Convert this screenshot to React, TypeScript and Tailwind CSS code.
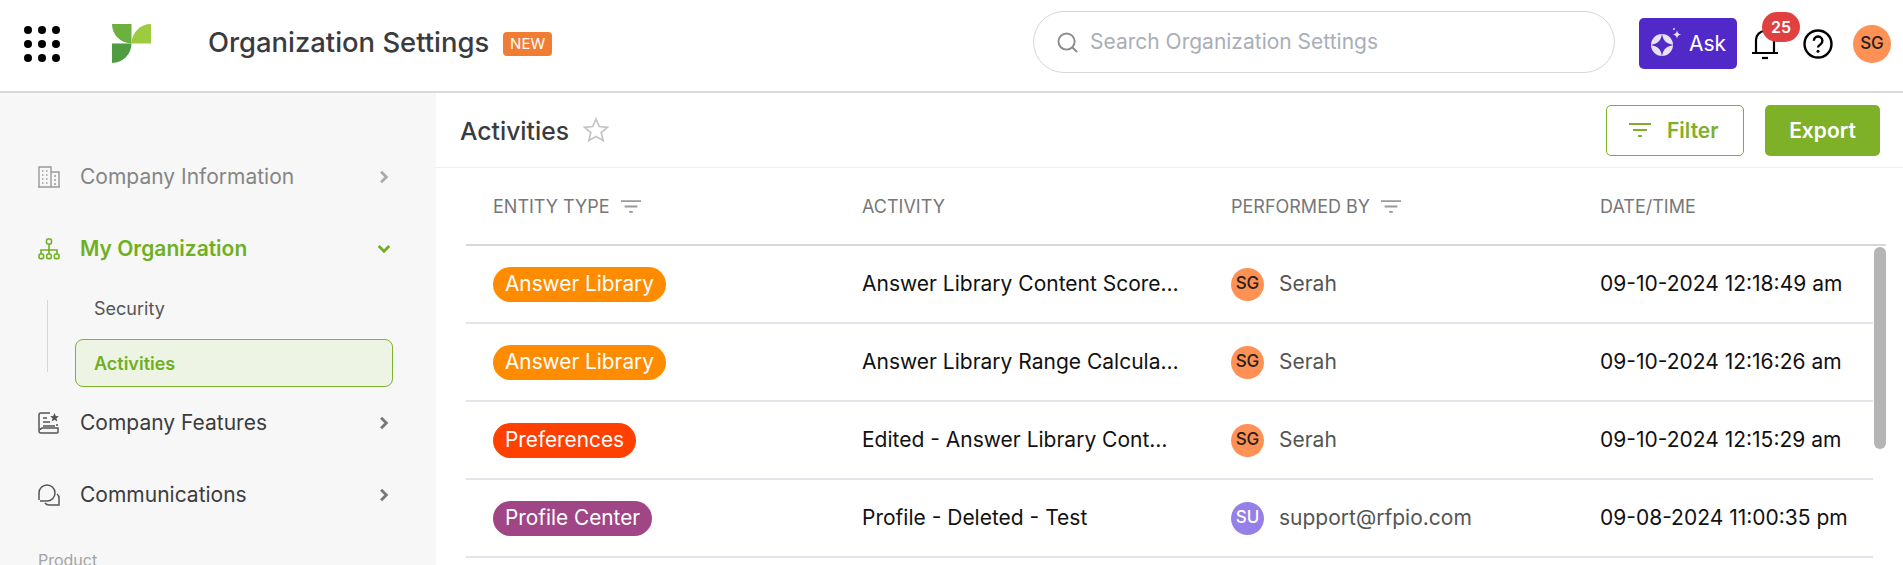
import React, { ReactElement } from "react";

const rows = [
  { type: "Answer Library", color: "bg-[#ff8c00]", activity: "Answer Library Content Score…", by: "Serah", initials: "SG", avatar: "bg-[#ff9155] text-[#222]", date: "09-10-2024 12:18:49 am" },
  { type: "Answer Library", color: "bg-[#ff8c00]", activity: "Answer Library Range Calcula…", by: "Serah", initials: "SG", avatar: "bg-[#ff9155] text-[#222]", date: "09-10-2024 12:16:26 am" },
  { type: "Preferences", color: "bg-[#ff4000]", activity: "Edited - Answer Library Cont…", by: "Serah", initials: "SG", avatar: "bg-[#ff9155] text-[#222]", date: "09-10-2024 12:15:29 am" },
  { type: "Profile Center", color: "bg-[#a04585]", activity: "Profile - Deleted - Test", by: "support@rfpio.com", initials: "SU", avatar: "bg-[#9580ea] text-white", date: "09-08-2024 11:00:35 pm" },
];

function FilterIcon({ className }: { className: string }): ReactElement {
  return (
    <svg viewBox="0 0 22 14" fill="none" stroke="currentColor" strokeWidth="2" className={className}>
      <path d="M0 1h22M4 7h14M9 13h4" />
    </svg>
  );
}

function Chevron({ down, className }: { down?: boolean; className: string }): ReactElement {
  return (
    <svg viewBox="0 0 12 12" fill="none" stroke="currentColor" strokeWidth="2.4" className={className}>
      <path d={down ? "M1.5 3.5 6 8l4.5-4.5" : "M3.5 1.5 8 6l-4.5 4.5"} />
    </svg>
  );
}

function NavItem({ icon, label, labelClass, chevronClass }: { icon: ReactElement; label: string; labelClass: string; chevronClass: string }): ReactElement {
  return (
    <div className="flex items-center h-[24px] pl-[38px] pr-[45px]">
      <div className="w-[42px] shrink-0">{icon}</div>
      <span className={`flex-1 text-[21px] ${labelClass}`}>{label}</span>
      <Chevron className={`w-[14px] h-[14px] ${chevronClass}`} />
    </div>
  );
}

export default function App(): ReactElement {
  return (
    <div className="h-[565px] w-[1903px] overflow-hidden bg-white flex flex-col font-['Inter',sans-serif]">
      {/* top bar */}
      <header className="h-[93px] shrink-0 border-b-2 border-[#d9d9d9] flex items-center">
        <svg viewBox="0 0 36 36" className="ml-[24px] w-[36px] h-[36px] shrink-0 -mt-[3px]" fill="#000">
          {[4, 18, 32].map((y) =>
            [4, 18, 32].map((x) => <circle key={`${x}-${y}`} cx={x} cy={y} r="4" />)
          )}
        </svg>
        <svg viewBox="0 0 39 39" className="ml-[52px] w-[39px] h-[39px] shrink-0 -mt-[4px]">
          <path d="M0 0H19.5V19.5A19.5 19.5 0 0 1 0 0Z" fill="#6cb03f" />
          <path d="M39 0V19.5H19.5A19.5 19.5 0 0 1 39 0Z" fill="#9ccc3d" />
          <path d="M0 19.500H19.500A19.500 19.500 0 0 1 0 39Z" fill="#509c40" />
        </svg>
        <h1 className="ml-[57px] -mt-[5px] text-[27.4px] leading-none font-medium text-[#3b3b3f] whitespace-nowrap">Organization Settings</h1>
        <span className="ml-[14px] -mt-[3px] h-[24px] w-[49px] rounded-[4px] bg-[#f07d33] text-white text-[15px] flex items-center justify-center">NEW</span>

        <div className="ml-auto -mt-[7px] w-[582px] h-[62px] rounded-full border border-[#d6d6d6] flex items-center pl-[23px]">
          <svg viewBox="0 0 22 22" fill="none" stroke="#8b8b8b" strokeWidth="2" className="w-[21px] h-[21px]">
            <circle cx="10" cy="10" r="8.5" />
            <path d="m16 16 5 5" />
          </svg>
          <span className="ml-[12px] text-[21px] text-[#a9aeb8]">Search Organization Settings</span>
        </div>

        <button className="ml-[24px] w-[98px] h-[51px] rounded-[5px] bg-[#5129c8] text-white flex items-center pl-[12px] -mt-[4px]">
          <svg viewBox="0 0 32 32" className="w-[32px] h-[32px]">
            <circle cx="11" cy="17" r="11" fill="#e6e3ee" />
            <path d="M11 5.500c1 7 3.500 10 11.500 11.500-8 1.500-10.500 4.500-11.500 11.500-1-7-3.500-10-11.500-11.500 8-1.500 10.500-4.500 11.500-11.500Z" fill="#5129c8" />
            <path d="M26 2c.5 3 1.400 3.900 4.200 4.400-2.800.5-3.700 1.400-4.200 4.400-.5-3-1.400-3.900-4.200-4.400 2.800-.5 3.700-1.400 4.200-4.400Z" fill="#e6e3ee" />
            <circle cx="23" cy="1" r="1" fill="#e6e3ee" />
          </svg>
          <span className="ml-[6px] text-[21px]">Ask</span>
        </button>

        <div className="relative ml-[14px] w-[28px] h-[36px] -mt-[3px]">
          <svg viewBox="0 0 28 36" fill="none" stroke="#000" strokeWidth="2.2" className="w-[28px] h-[36px]">
            <path d="M5 26V14a9 9 0 0 1 18 0v12M1 27h26" />
            <path d="M11 32h6" />
          </svg>
          <span className="absolute left-[11px] -top-[14px] w-[38px] h-[30px] rounded-full bg-[#e04040] text-white text-[16px] font-semibold flex items-center justify-center">25</span>
        </div>

        <svg viewBox="0 0 30 30" fill="none" stroke="#000" className="ml-[24px] w-[30px] h-[30px] -mt-[3px]">
          <circle cx="15" cy="15" r="13.5" strokeWidth="2.4" />
          <path d="M10.800 11.800a4.300 4.300 0 1 1 6.600 3.600c-1.600 1-2.400 1.700-2.400 3.200" strokeWidth="2.400" />
          <circle cx="15" cy="22.300" r="1.500" fill="#000" stroke="none" />
        </svg>

        <div className="ml-[20px] mr-[12px] w-[38px] h-[38px] rounded-full bg-[#ff9155] text-[#222] text-[17px] font-medium flex items-center justify-center -mt-[4px]">SG</div>
      </header>

      <div className="flex-1 flex min-h-0">
        {/* sidebar */}
        <aside className="w-[436px] shrink-0 bg-[#f7f7f7] pt-[72px] overflow-hidden">
          <NavItem
            label="Company Information"
            labelClass="text-[#858585]"
            chevronClass="text-[#aaa]"
            icon={
              <svg viewBox="0 0 22 22" fill="none" stroke="#999" strokeWidth="1.4" className="w-[22px] h-[22px]">
                <path d="M1 21V1h12v20M13 6h8v15M0 21h22" />
                <path d="M4 5h1.500M8 5h1.500M4 9h1.500M8 9h1.500M4 13h1.500M8 13h1.500M4 17h1.500M8 17h1.500M16 10h2M16 14h2M16 18h2" />
              </svg>
            }
          />
          <div className="mt-[48px]">
            <div className="flex items-center h-[24px] pl-[38px] pr-[45px]">
              <div className="w-[42px] shrink-0">
                <svg viewBox="0 0 22 22" fill="none" stroke="#6fb01f" strokeWidth="1.6" className="w-[22px] h-[22px]">
                  <rect x="8.500" y="1" width="5" height="5" rx="1.500" />
                  <path d="M11 6v5M3 16v-4h16v4M11 11v5" />
                  <rect x="1" y="16" width="4.600" height="4.600" rx="1.400" />
                  <rect x="8.700" y="16" width="4.600" height="4.600" rx="1.400" />
                  <rect x="16.400" y="16" width="4.600" height="4.600" rx="1.400" />
                </svg>
              </div>
              <span className="flex-1 text-[21px] font-semibold text-[#6fb01f]">My Organization</span>
              <Chevron down className="w-[14px] h-[14px] text-[#6fb01f]" />
            </div>

            <div className="flex mt-[39px] pl-[47px]">
              <div className="w-px h-[72px] bg-[#d6d6d6] shrink-0" />
              <div className="ml-[27px] w-[318px] -mt-[10px]">
                <div className="pl-[19px] h-[20px] mt-[8px] flex items-center text-[18px] text-[#555]">Security</div>
                <div className="mt-[21px] h-[48px] pl-[18px] rounded-[8px] border border-[#7db52c] bg-[#edf4e4] flex items-center text-[18px] font-semibold text-[#6fb01f]">Activities</div>
              </div>
            </div>
          </div>

          <div className="mt-[24px]">
            <NavItem
              label="Company Features"
              labelClass="text-[#3c3c3c]"
              chevronClass="text-[#777]"
              icon={
                <svg viewBox="0 0 22 22" fill="none" stroke="#555" strokeWidth="1.5" className="w-[22px] h-[22px]">
                  <path d="M12 1H3a2 2 0 0 0-2 2v16a2 2 0 0 0 2 2h16a1 1 0 0 0 1-1v-4H4.500a2 2 0 0 0-2 2" />
                  <path d="M5 6h4M5 10h7M5 14h12M19 14v-2" />
                  <path d="m16.500 1 1.300 2.900 3.100.3-2.400 2.100.7 3.100-2.700-1.600-2.700 1.600.7-3.100-2.400-2.100 3.100-.3Z" fill="#555" stroke="none" />
                </svg>
              }
            />
            <div className="mt-[48px]">
              <NavItem
                label="Communications"
                labelClass="text-[#3c3c3c]"
                chevronClass="text-[#777]"
                icon={
                  <svg viewBox="0 0 22 22" fill="none" stroke="#555" strokeWidth="1.5" className="w-[22px] h-[22px]">
                    <path d="M1 16V9a8 8 0 1 1 8 8H2" />
                    <path d="M19 10a5 5 0 0 1 2 4v7H11a5 5 0 0 1-4-2" />
                  </svg>
                }
              />
            </div>
          </div>

          <div className="mt-[45px] pl-[38px] text-[16px] leading-none text-[#a3a3a3]">Product</div>
        </aside>

        {/* content */}
        <main className="flex-1 min-w-0 flex flex-col">
          <div className="h-[75px] shrink-0 border-b border-[#eeeeee] flex items-center pl-[24px] pr-[23px]">
            <h2 className="mt-[4px] text-[24.7px] font-medium text-[#3b3b3f]">Activities</h2>
            <svg viewBox="0 0 24 24" fill="none" stroke="#c4c4c4" strokeWidth="1.6" className="ml-[14px] w-[26px] h-[26px]">
              <path d="m12 2 3 6.800 7.400.7-5.600 4.900 1.700 7.300-6.500-3.800-6.500 3.800 1.700-7.300L1.600 9.500 9 8.800Z" />
            </svg>
            <button className="ml-auto w-[138px] h-[51px] rounded-[5px] border border-[#7fb02b] text-[#7fb02b] text-[21px] font-semibold flex items-center pl-[21px] gap-[15px]">
              <FilterIcon className="w-[24px] h-[14px]" />
              <span className="mt-[2px]">Filter</span>
            </button>
            <button className="ml-[21px] w-[115px] h-[51px] pt-[2px] rounded-[5px] bg-[#7eb028] text-white text-[21px] font-semibold">Export</button>
          </div>

          <div className="relative ml-[30px] w-[1420px]">
            <div className="h-[78px] border-b-2 border-[#d7d7dc] grid grid-cols-[369px_369px_369px_313px] items-center text-[18px] text-[#777] uppercase">
              <div className="pl-[27px] flex items-center gap-[11px]">
                Entity Type
                <FilterIcon className="w-[20px] h-[13px] text-[#999]" />
              </div>
              <div className="pl-[27px]">Activity</div>
              <div className="pl-[27px] flex items-center gap-[11px]">
                Performed By
                <FilterIcon className="w-[20px] h-[13px] text-[#999]" />
              </div>
              <div className="pl-[27px]">Date/Time</div>
            </div>

            {rows.map((row, index) => (
              <div
                key={index}
                className="h-[78px] w-[1407px] border-b-2 border-[#e4e4ea] grid grid-cols-[369px_369px_369px_300px] items-center"
              >
                <div className="pl-[27px]">
                  <span className={`inline-flex items-center h-[35px] px-[12px] rounded-full text-white text-[20.8px] ${row.color}`}>{row.type}</span>
                </div>
                <div className="pl-[27px] text-[21px] text-[#111] whitespace-nowrap">{row.activity}</div>
                <div className="pl-[27px] flex items-center">
                  <span className={`w-[33px] h-[33px] shrink-0 rounded-full text-[17px] font-medium flex items-center justify-center ${row.avatar}`}>{row.initials}</span>
                  <span className="ml-[15px] text-[21px] text-[#555]">{row.by}</span>
                </div>
                <div className="pl-[27px] text-[21px] text-[#111] whitespace-nowrap">{row.date}</div>
              </div>
            ))}

            {/* scrollbar thumb */}
            <div className="absolute right-0 top-[79px] w-[12px] h-[202px] rounded-full bg-[#b5b5b5]" />
          </div>
        </main>
      </div>
    </div>
  );
}
